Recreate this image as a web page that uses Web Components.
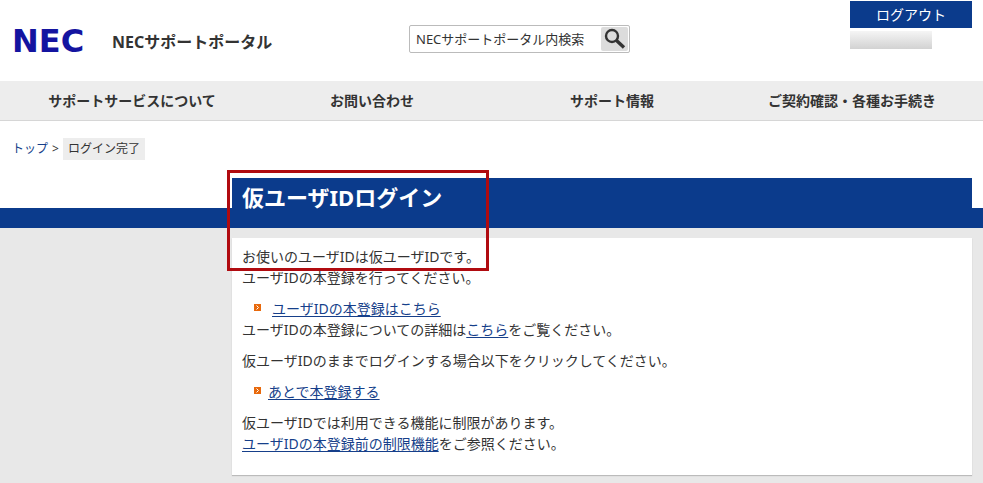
<!DOCTYPE html>
<html lang="ja">
<head>
<meta charset="utf-8">
<title>仮ユーザIDログイン | NECサポートポータル</title>
<style>
  html { background: #e8e8e8; }
  body {
    margin: 0;
    background: #e8e8e8;
    color: #333;
    font: 14px/21px "Noto Sans", "Noto Sans CJK JP", sans-serif;
    --blue: #0b3b8c;
    --link: #163f8a;
    --page-left: 12px;
    --page-right: 11px;
  }
  p { margin: 0 0 10px; }
  p:last-child { margin: 0; }
  p a { color: var(--link); text-underline-offset: 2px; }
</style>
</head>
<body>
<site-header></site-header>
<site-nav></site-nav>
<bread-crumb>ログイン完了</bread-crumb>
<content-section>
  <span slot="title">仮ユーザIDログイン</span>
  <p>お使いのユーザIDは仮ユーザIDです。<br>ユーザIDの本登録を行ってください。</p>
  <arrow-link class="wide">ユーザIDの本登録はこちら</arrow-link>
  <p>ユーザIDの本登録についての詳細は<a href="#detail">こちら</a>をご覧ください。</p>
  <p>仮ユーザIDのままでログインする場合以下をクリックしてください。</p>
  <arrow-link class="spaced">あとで本登録する</arrow-link>
  <p>仮ユーザIDでは利用できる機能に制限があります。<br><a href="#limits">ユーザIDの本登録前の制限機能</a>をご参照ください。</p>
</content-section>

<script>
const define = (name, markup) => customElements.define(name, class extends HTMLElement {
  constructor() {
    super();
    this.attachShadow({ mode: "open" }).innerHTML = markup;
  }
});

define("brand-logo", `
  <style>
    :host { display: block; }
    svg { display: block; }
    text { font: bold 32px "DejaVu Sans", sans-serif; fill: #1414a0; }
  </style>
  <svg width="90" height="48" viewBox="0 0 90 48" role="img" aria-label="NEC"><text x="0" y="35">NEC</text></svg>
`);

define("search-box", `
  <style>
    :host { display: block; }
    form { display: flex; box-sizing: border-box; height: 28px; margin: 0; padding: 1px; border: 1px solid #bbb; border-radius: 2px; background: #fff; }
    input { flex: 1; min-width: 0; padding: 0 5px; border: 0; outline: 0; background: none; color: #333; font: 13px/24px "Noto Sans", "Noto Sans CJK JP", sans-serif; }
    button { display: grid; place-items: center; width: 27px; padding: 0; border: 0; border-radius: 2px; background: #dcdcdc; }
  </style>
  <form role="search">
    <input type="text" aria-label="サイト内検索" value="NECサポートポータル内検索">
    <button type="button" aria-label="検索">
      <svg width="22" height="22" viewBox="0 0 22 22" fill="none" stroke="#333">
        <circle cx="8" cy="8" r="6" stroke-width="2.4"/>
        <path d="M12.5 12.5 20 19.5" stroke-width="3.4"/>
      </svg>
    </button>
  </form>
`);

define("user-panel", `
  <style>
    :host { display: block; }
    button { display: block; width: 100%; height: 27px; padding: 0; border: 0; background: var(--blue); color: #fff; font: 14px/26px "Noto Sans", "Noto Sans CJK JP", sans-serif; }
    .name { width: 82px; height: 18px; margin-top: 3px; background: linear-gradient(#f5f5f5, #d2d2d2); }
  </style>
  <button type="button">ログアウト</button>
  <div class="name"></div>
`);

define("site-header", `
  <style>
    :host { display: grid; grid-template-columns: 100px 297px 221px 1fr; align-items: start; min-height: 80px; padding: 1px var(--page-right) 0 var(--page-left); background: #fff; }
    brand-logo { margin-top: 16px; }
    .name { margin-top: 29px; font-size: 16px; line-height: 24px; font-weight: bold; }
    search-box { margin-top: 24px; }
    user-panel { justify-self: end; width: 122px; }
  </style>
  <brand-logo></brand-logo>
  <div class="name">NECサポートポータル</div>
  <search-box></search-box>
  <user-panel></user-panel>
`);

define("site-nav", `
  <style>
    :host { display: block; padding: 0 var(--page-right) 0 var(--page-left); border-bottom: 1px solid #d6d6d6; background: #ededed; }
    nav { display: grid; grid-template-columns: repeat(4, 1fr); }
    a { color: #333; font-weight: bold; line-height: 39px; text-align: center; text-decoration: none; }
  </style>
  <nav>
    <a href="#service">サポートサービスについて</a>
    <a href="#contact">お問い合わせ</a>
    <a href="#info">サポート情報</a>
    <a href="#contract">ご契約確認・各種お手続き</a>
  </nav>
`);

define("bread-crumb", `
  <style>
    :host { display: block; padding: 17px var(--page-right) 18px var(--page-left); background: #fff; font-size: 12px; line-height: 22px; }
    nav { display: flex; gap: 4px; }
    a { color: var(--link); text-decoration: none; }
    .here { padding: 0 5px; background: #ededed; }
  </style>
  <nav><a href="#top">トップ</a><span>&gt;</span><span class="here"><slot></slot></span></nav>
`);

define("arrow-link", `
  <style>
    :host { display: flex; align-items: flex-start; padding-left: 12px; gap: 7px; }
    :host(.wide) { gap: 11px; }
    :host(.spaced) { margin-bottom: 10px; }
    svg { flex: none; margin-top: 6px; }
    a { color: var(--link); text-underline-offset: 2px; }
  </style>
  <svg width="7" height="7" viewBox="0 0 7 7"><rect width="7" height="7" fill="#e8690c"/><path d="M2.5 1.5l2 2-2 2" fill="none" stroke="#fff"/></svg>
  <a href="#register"><slot></slot></a>
`);

define("content-section", `
  <style>
    :host { display: block; }
    .band { padding: 0 var(--page-right) 0 232px; background: linear-gradient(#fff 30px, var(--blue) 30px); }
    h1 { position: relative; margin: 0; padding: 0 10px 12px; background: var(--blue); color: #fff; font-size: 22px; line-height: 38px; }
    .mark { position: absolute; left: -5px; top: -8px; box-sizing: border-box; width: 262px; height: 101px; border: 3px solid #b00b10; }
    .body { padding: 10px var(--page-right) 8px 232px; }
    .card { padding: 8px 10px 21px; background: #fff; box-shadow: 0 1px 1px #bbb; }
  </style>
  <div class="band"><h1><slot name="title"></slot><span class="mark"></span></h1></div>
  <div class="body"><div class="card"><slot></slot></div></div>
`);
</script>
</body>
</html>
